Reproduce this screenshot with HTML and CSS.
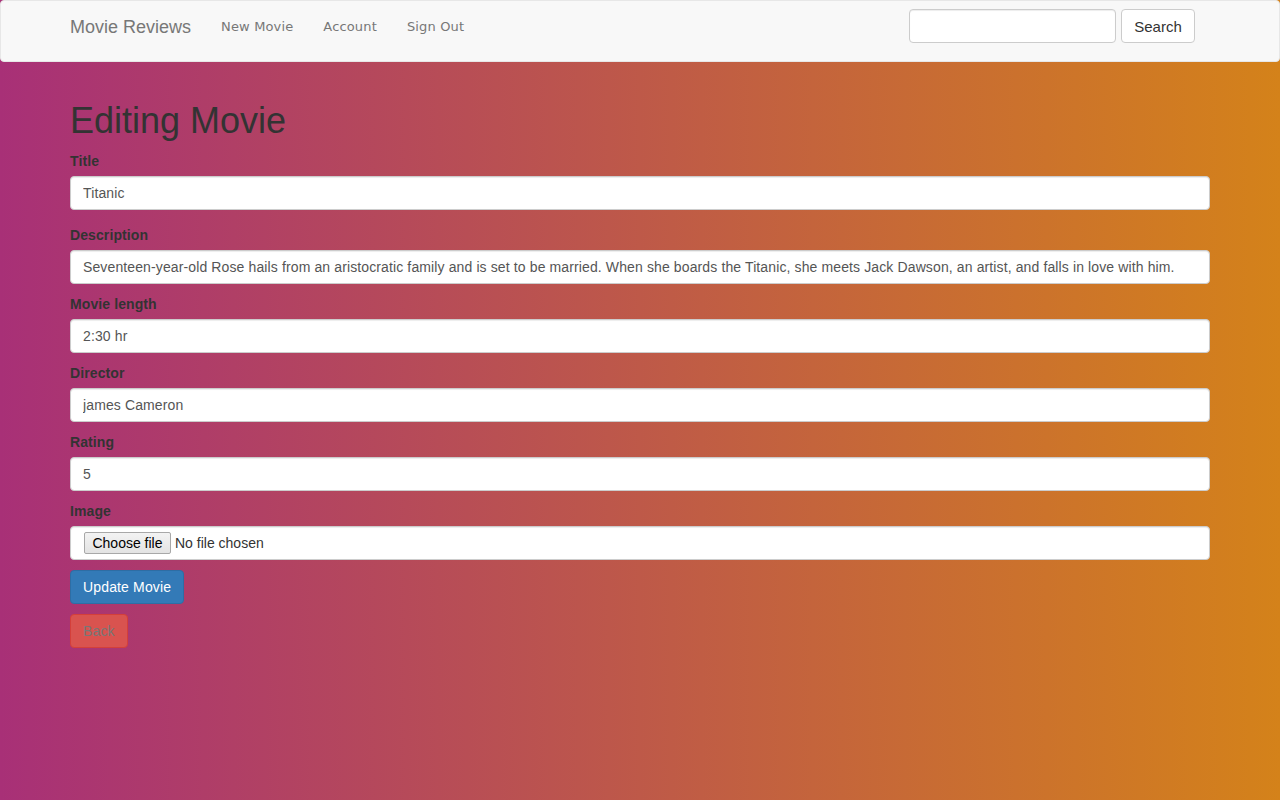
FILE: index.html
```html
<!DOCTYPE html>
<html lang="en">
<head>
<meta charset="utf-8">
<title>Movie Reviews</title>
<link rel="stylesheet" href="styles.css">
</head>
<body>
<nav class="navbar">
  <div class="nav-inner">
    <a class="brand" href="#">Movie Reviews</a>
    <ul class="nav-links">
      <li><a href="#">New Movie</a></li>
      <li><a href="#">Account</a></li>
      <li><a href="#">Sign Out</a></li>
    </ul>
    <form class="search">
      <input class="search-input" type="text">
      <button class="search-btn" type="button">Search</button>
    </form>
  </div>
</nav>
<main class="container">
  <h1 class="title">Editing Movie</h1>
  <form class="movie-form">
    <div class="group group-first">
      <label class="label">Title</label>
      <input class="control" type="text" value="Titanic">
    </div>
    <div class="group">
      <label class="label">Description</label>
      <input class="control" type="text" value="Seventeen-year-old Rose hails from an aristocratic family and is set to be married. When she boards the Titanic, she meets Jack Dawson, an artist, and falls in love with him.">
    </div>
    <div class="group">
      <label class="label">Movie length</label>
      <input class="control" type="text" value="2:30 hr">
    </div>
    <div class="group">
      <label class="label">Director</label>
      <input class="control" type="text" value="james Cameron">
    </div>
    <div class="group">
      <label class="label">Rating</label>
      <input class="control" type="text" value="5">
    </div>
    <div class="group">
      <label class="label">Image</label>
      <label class="control file">
        <span class="file-btn">Choose file</span>
        <span class="file-name">No file chosen</span>
      </label>
    </div>
    <div class="actions">
      <button class="btn btn-primary" type="button">Update Movie</button>
      <a class="btn btn-danger" href="#">Back</a>
    </div>
  </form>
</main>
</body>
</html>
```

FILE: styles.css
```css
html {
  min-height: 100%;
  background: linear-gradient(to right, #a83077, #d4821a);
}
body {
  margin: 0;
  min-height: 800px;
  font-family: "Liberation Sans", Arial, sans-serif;
  font-size: 14px;
  line-height: 20px;
  color: #333;
}
.navbar {
  height: 60px;
  background: #f8f8f8;
  border: 1px solid #e7e7e7;
  border-radius: 4px;
}
.nav-inner {
  width: 1140px;
  margin: 0 auto;
  display: flex;
  align-items: center;
  height: 60px;
}
.brand {
  font-size: 18px;
  color: #777;
  text-decoration: none;
  line-height: 20px;
  margin-top: -8px;
  margin-right: 15px;
}
.nav-links {
  list-style: none;
  margin: -8px 0 0;
  padding: 0;
  display: flex;
}
.nav-links a {
  display: block;
  padding: 0 15px;
  font-family: "DejaVu Sans", Verdana, sans-serif;
  font-size: 13px;
  letter-spacing: 0.15px;
  color: #777;
  text-decoration: none;
  line-height: 20px;
}
.search {
  margin-left: auto;
  margin-right: 15px;
  display: flex;
  gap: 5px;
  margin-top: -10px;
}
.search-input {
  width: 207px;
  height: 34px;
  box-sizing: border-box;
  border: 1px solid #ccc;
  border-radius: 4px;
  background: #fff;
  box-shadow: inset 0 1px 1px rgba(0,0,0,.075);
}
.search-btn {
  height: 34px;
  width: 74px;
  box-sizing: border-box;
  border: 1px solid #ccc;
  border-radius: 4px;
  background: #fff;
  color: #333;
  font-family: "Liberation Sans", Arial, sans-serif;
  font-size: 15px;
  padding: 0;
}
.container {
  width: 1140px;
  margin: 0 auto;
}
.title {
  font-family: "Liberation Sans", Arial, sans-serif;
  font-weight: 500;
  font-size: 36px;
  line-height: 40px;
  margin: 39px 0 10px;
  color: #333;
}
.movie-form {
  display: flex;
  flex-direction: column;
}
.group {
  display: flex;
  flex-direction: column;
  margin-bottom: 10px;
}
.group-first {
  margin-bottom: 15px;
}
.label {
  font-weight: bold;
  font-size: 14px;
  line-height: 20px;
  margin-bottom: 5px;
  color: #333;
  letter-spacing: 0.1px;
}
.control {
  box-sizing: border-box;
  height: 34px;
  width: 100%;
  padding: 6px 12px;
  font-family: "Liberation Sans", Arial, sans-serif;
  font-size: 14px;
  letter-spacing: 0.12px;
  color: #555;
  background: #fff;
  border: 1px solid #ccc;
  border-radius: 4px;
  box-shadow: inset 0 1px 1px rgba(0,0,0,.075);
  margin: 0;
}
.file {
  display: flex;
  align-items: center;
  padding: 0 12px 0 13px;
  color: #333;
  letter-spacing: 0;
}
.file-btn {
  box-sizing: border-box;
  height: 22px;
  width: 87px;
  display: flex;
  align-items: center;
  justify-content: center;
  font-size: 14px;
  color: #000;
  background: linear-gradient(#f3f3f3, #e3e3e3);
  border: 1px solid #a8a8a8;
  border-radius: 2px;
  margin-right: 4px;
}
.file-name {
  font-size: 14px;
  color: #333;
}
.actions {
  display: flex;
  flex-direction: column;
  align-items: flex-start;
  gap: 10px;
}
.btn {
  box-sizing: border-box;
  height: 34px;
  padding: 6px 12px;
  border-radius: 4px;
  font-family: "Liberation Sans", Arial, sans-serif;
  font-size: 14px;
  line-height: 20px;
  letter-spacing: 0.15px;
  text-decoration: none;
  display: inline-block;
}
.btn-primary {
  background: #337ab7;
  border: 1px solid #2e6da4;
  color: #fff;
}
.btn-danger {
  background: #d9534f;
  border: 1px solid #d43f3a;
  color: #777;
}
```
